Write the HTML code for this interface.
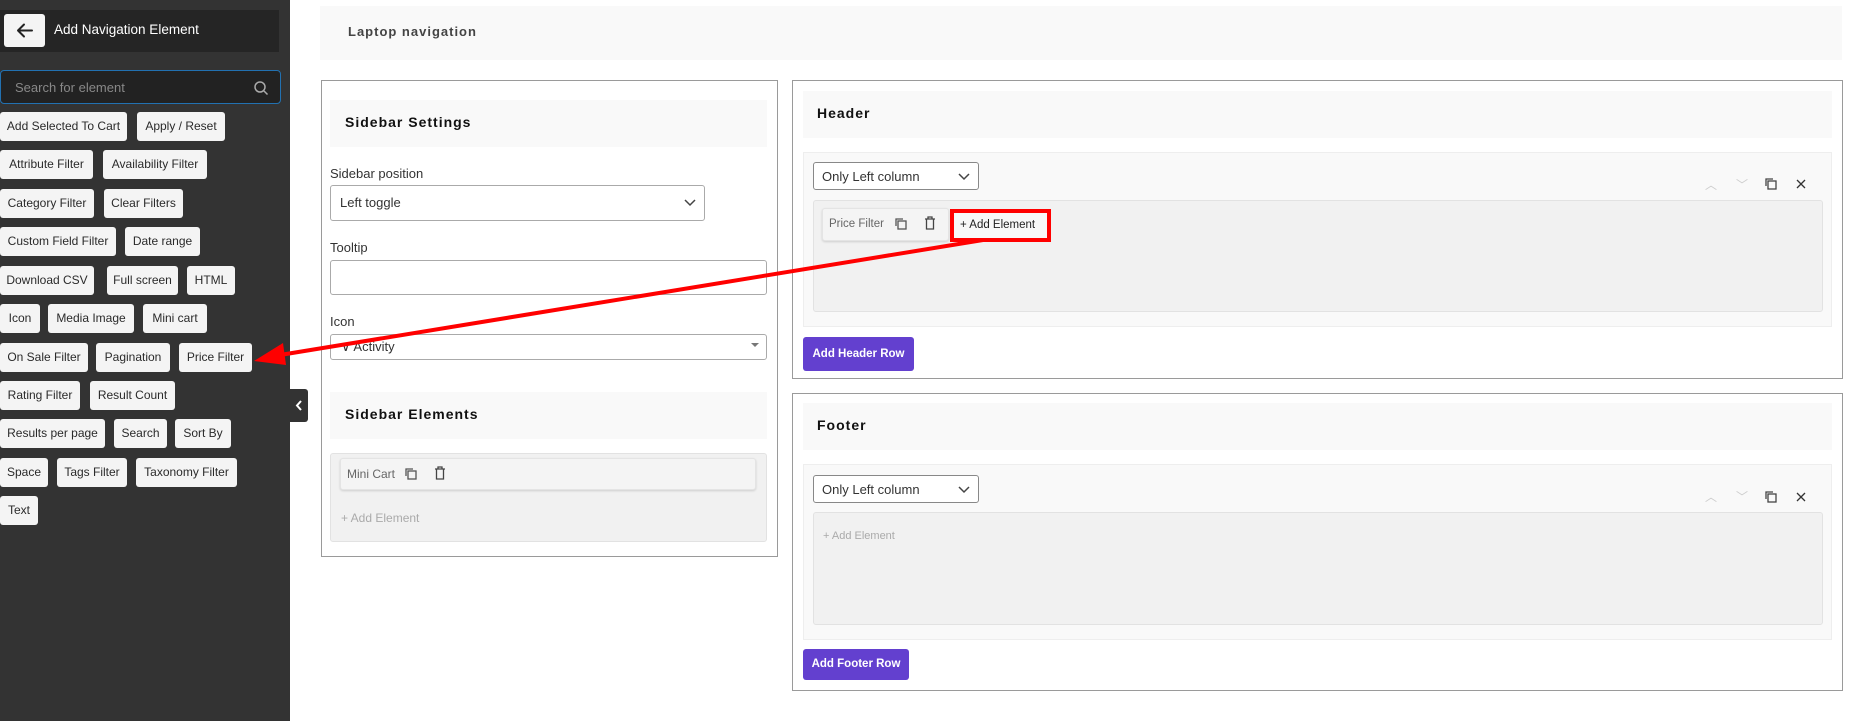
<!DOCTYPE html>
<html><head><meta charset="utf-8"><style>
*{box-sizing:border-box;margin:0;padding:0}
body{width:1875px;height:721px;background:#fff;font-family:"Liberation Sans","DejaVu Sans",sans-serif;position:relative;overflow:hidden;color:#222}
.a{position:absolute}
.side{left:0;top:0;width:290px;height:721px;background:#333}
.chip{position:absolute;height:29px;background:#f4f4f4;border-radius:3px;font-size:12px;line-height:29px;color:#2a2a2a;text-align:center;white-space:nowrap}
.box{position:absolute;border:1px solid #9a9a9a;background:#fff}
.tb{position:absolute;background:#f9f9f9;font-weight:bold;font-size:14px;letter-spacing:1px;color:#111}
.lbl{position:absolute;font-size:13px;color:#333}
.inp{position:absolute;border:1px solid #aaa;border-radius:3px;background:#fff;font-size:13px;color:#333;white-space:nowrap}
.row{position:absolute;background:#f9f9f9;border:1px solid #eee}
.inner{position:absolute;background:#f1f1f1;border:1px solid #e2e2e2;border-radius:3px}
.btn{position:absolute;background:#6340cf;color:#fff;font-size:11.5px;font-weight:bold;border-radius:3px;text-align:center;white-space:nowrap}
.ic{position:absolute;font-size:12px;color:#555;white-space:nowrap}
</style></head><body>
<div class="a side"></div>
<div class="a" style="left:0;top:10px;width:279px;height:42px;background:#252525"></div>
<div class="a" style="left:4px;top:14px;width:41px;height:33px;background:#f4f4f4;border-radius:3px"><svg width="41" height="33"><path d="M14 16.5h14M14 16.5l6-6M14 16.5l6 6" stroke="#222" stroke-width="2" fill="none" stroke-linecap="round"/></svg></div>
<div class="a" style="left:54px;top:22px;color:#fff;font-size:13.5px">Add Navigation Element</div>
<div class="a" style="left:0;top:70px;width:281px;height:34px;background:#222;border:1px solid #2271b1;border-radius:4px"></div>
<div class="a" style="left:15px;top:80px;color:#888;font-size:13px">Search for element</div>
<svg class="a" style="left:253px;top:80px" width="16" height="16"><circle cx="7" cy="7" r="5" stroke="#aaa" stroke-width="1.5" fill="none"/><path d="M11 11l3.5 3.5" stroke="#aaa" stroke-width="1.5"/></svg>

<div class="chip" style="left:0;top:112px;width:127px">Add Selected To Cart</div>
<div class="chip" style="left:137px;top:112px;width:88px">Apply / Reset</div>
<div class="chip" style="left:0;top:150px;width:93px">Attribute Filter</div>
<div class="chip" style="left:103px;top:150px;width:104px">Availability Filter</div>
<div class="chip" style="left:0;top:189px;width:94px">Category Filter</div>
<div class="chip" style="left:104px;top:189px;width:79px">Clear Filters</div>
<div class="chip" style="left:0;top:227px;width:116px">Custom Field Filter</div>
<div class="chip" style="left:125px;top:227px;width:75px">Date range</div>
<div class="chip" style="left:0;top:266px;width:94px">Download CSV</div>
<div class="chip" style="left:107px;top:266px;width:71px">Full screen</div>
<div class="chip" style="left:187px;top:266px;width:48px">HTML</div>
<div class="chip" style="left:0;top:304px;width:40px">Icon</div>
<div class="chip" style="left:48px;top:304px;width:86px">Media Image</div>
<div class="chip" style="left:143px;top:304px;width:64px">Mini cart</div>
<div class="chip" style="left:0;top:343px;width:88px">On Sale Filter</div>
<div class="chip" style="left:96px;top:343px;width:74px">Pagination</div>
<div class="chip" style="left:179px;top:343px;width:73px">Price Filter</div>
<div class="chip" style="left:0;top:381px;width:80px">Rating Filter</div>
<div class="chip" style="left:90px;top:381px;width:85px">Result Count</div>
<div class="chip" style="left:0;top:419px;width:105px">Results per page</div>
<div class="chip" style="left:114px;top:419px;width:53px">Search</div>
<div class="chip" style="left:175px;top:419px;width:56px">Sort By</div>
<div class="chip" style="left:0;top:458px;width:48px">Space</div>
<div class="chip" style="left:57px;top:458px;width:70px">Tags Filter</div>
<div class="chip" style="left:136px;top:458px;width:101px">Taxonomy Filter</div>
<div class="chip" style="left:0;top:496px;width:38px">Text</div>
<div class="a" style="left:290px;top:389px;width:18px;height:33px;background:#333;border-radius:0 3px 3px 0"><svg width="18" height="33"><path d="M11 12l-4 4.5 4 4.5" stroke="#fff" stroke-width="2" fill="none"/></svg></div>

<div class="a" style="left:320px;top:6px;width:1522px;height:54px;background:#f9f9f9"></div>
<div class="a" style="left:348px;top:24px;font-size:13px;font-weight:bold;letter-spacing:1px;color:#444">Laptop navigation</div>

<div class="box" style="left:321px;top:80px;width:457px;height:477px"></div>
<div class="tb" style="left:330px;top:100px;width:437px;height:47px;padding:14px 15px">Sidebar Settings</div>
<div class="lbl" style="left:330px;top:166px">Sidebar position</div>
<div class="inp" style="left:330px;top:185px;width:375px;height:36px;padding:9px 9px">Left toggle<svg style="position:absolute;right:8px;top:13px" width="12" height="8"><path d="M1 1l5 5 5-5" stroke="#444" stroke-width="1.5" fill="none"/></svg></div>
<div class="lbl" style="left:330px;top:240px">Tooltip</div>
<div class="inp" style="left:330px;top:260px;width:437px;height:35px"></div>
<div class="lbl" style="left:330px;top:314px">Icon</div>
<div class="inp" style="left:330px;top:334px;width:437px;height:26px;padding:4px 10px">∨ Activity<span style="position:absolute;right:7px;top:8px;border:4px solid transparent;border-top:4px solid #777"></span></div>
<div class="tb" style="left:330px;top:392px;width:437px;height:47px;padding:14px 15px">Sidebar Elements</div>
<div class="inner" style="left:330px;top:453px;width:437px;height:89px"></div>
<div class="a" style="left:340px;top:458px;width:416px;height:32px;background:#f4f4f4;border:1px solid #e4e4e4;border-radius:3px;box-shadow:0 1px 2px rgba(0,0,0,.15)"></div>
<div class="ic" style="left:347px;top:467px;color:#666">Mini Cart</div>
<svg class="a" style="left:404px;top:467px" width="14" height="14"><rect x="4" y="4" width="8" height="8" stroke="#555" fill="none" stroke-width="1.3"/><path d="M2 9V2h7" stroke="#555" fill="none" stroke-width="1.3"/></svg>
<svg class="a" style="left:434px;top:466px" width="12" height="14"><path d="M1 3h10M4 3V1h4v2M2.5 3v10h7V3" stroke="#444" fill="none" stroke-width="1.3"/></svg>
<div class="ic" style="left:341px;top:511px;color:#aaa">+ Add Element</div>

<div class="box" style="left:792px;top:80px;width:1051px;height:299px"></div>
<div class="tb" style="left:803px;top:91px;width:1029px;height:47px;padding:14px 14px">Header</div>
<div class="row" style="left:803px;top:152px;width:1029px;height:175px"></div>
<div class="inp" style="left:813px;top:162px;width:166px;height:28px;padding:6px 8px;border-color:#888">Only Left column<svg style="position:absolute;right:8px;top:10px" width="12" height="8"><path d="M1 1l5 5 5-5" stroke="#444" stroke-width="1.5" fill="none"/></svg></div>
<div class="inner" style="left:813px;top:200px;width:1010px;height:112px"></div>
<div class="a" style="left:822px;top:208px;width:127px;height:33px;background:#f4f4f4;border:1px solid #e4e4e4;border-radius:3px;box-shadow:0 1px 2px rgba(0,0,0,.15)"></div>
<div class="ic" style="left:829px;top:218px;color:#666;font-size:11.5px">Price Filter</div>
<svg class="a" style="left:894px;top:217px" width="14" height="14"><rect x="4" y="4" width="8" height="8" stroke="#555" fill="none" stroke-width="1.3"/><path d="M2 9V2h7" stroke="#555" fill="none" stroke-width="1.3"/></svg>
<svg class="a" style="left:924px;top:216px" width="12" height="14"><path d="M1 3h10M4 3V1h4v2M2.5 3v10h7V3" stroke="#444" fill="none" stroke-width="1.3"/></svg>
<div class="a" style="left:950px;top:209px;width:101px;height:33px;border:4px solid #ff0000;background:#f8f8f8;font-size:11.5px;padding:6px 6px;color:#222;white-space:nowrap">+ Add Element</div>
<div class="ic" style="left:1705px;top:176px;color:#ccc">︿</div>
<div class="ic" style="left:1736px;top:176px;color:#ccc">﹀</div>
<svg class="a" style="left:1764px;top:177px" width="14" height="14"><rect x="4" y="4" width="8" height="8" stroke="#444" fill="none" stroke-width="1.3"/><path d="M2 9V2h7" stroke="#444" fill="none" stroke-width="1.3"/></svg>
<svg class="a" style="left:1796px;top:179px" width="10" height="10"><path d="M1 1l8 8M9 1l-8 8" stroke="#333" stroke-width="1.3"/></svg>
<div class="btn" style="left:803px;top:337px;width:111px;height:34px;line-height:34px">Add Header Row</div>

<div class="box" style="left:792px;top:393px;width:1051px;height:298px"></div>
<div class="tb" style="left:803px;top:403px;width:1029px;height:47px;padding:14px 14px">Footer</div>
<div class="row" style="left:803px;top:464px;width:1029px;height:176px"></div>
<div class="inp" style="left:813px;top:475px;width:166px;height:28px;padding:6px 8px;border-color:#888">Only Left column<svg style="position:absolute;right:8px;top:10px" width="12" height="8"><path d="M1 1l5 5 5-5" stroke="#444" stroke-width="1.5" fill="none"/></svg></div>
<div class="inner" style="left:813px;top:512px;width:1010px;height:113px"></div>
<div class="ic" style="left:823px;top:530px;color:#aaa;font-size:11px">+ Add Element</div>
<div class="ic" style="left:1705px;top:488px;color:#ccc">︿</div>
<div class="ic" style="left:1736px;top:488px;color:#ccc">﹀</div>
<svg class="a" style="left:1764px;top:490px" width="14" height="14"><rect x="4" y="4" width="8" height="8" stroke="#444" fill="none" stroke-width="1.3"/><path d="M2 9V2h7" stroke="#444" fill="none" stroke-width="1.3"/></svg>
<svg class="a" style="left:1796px;top:492px" width="10" height="10"><path d="M1 1l8 8M9 1l-8 8" stroke="#333" stroke-width="1.3"/></svg>
<div class="btn" style="left:803px;top:649px;width:106px;height:31px;line-height:31px">Add Footer Row</div>

<svg class="a" style="left:0;top:0" width="1875" height="721"><path d="M983 240L280 355" stroke="#ff0000" stroke-width="4"/><path d="M254 361L283 343L286 365Z" fill="#ff0000"/></svg>
</body></html>
